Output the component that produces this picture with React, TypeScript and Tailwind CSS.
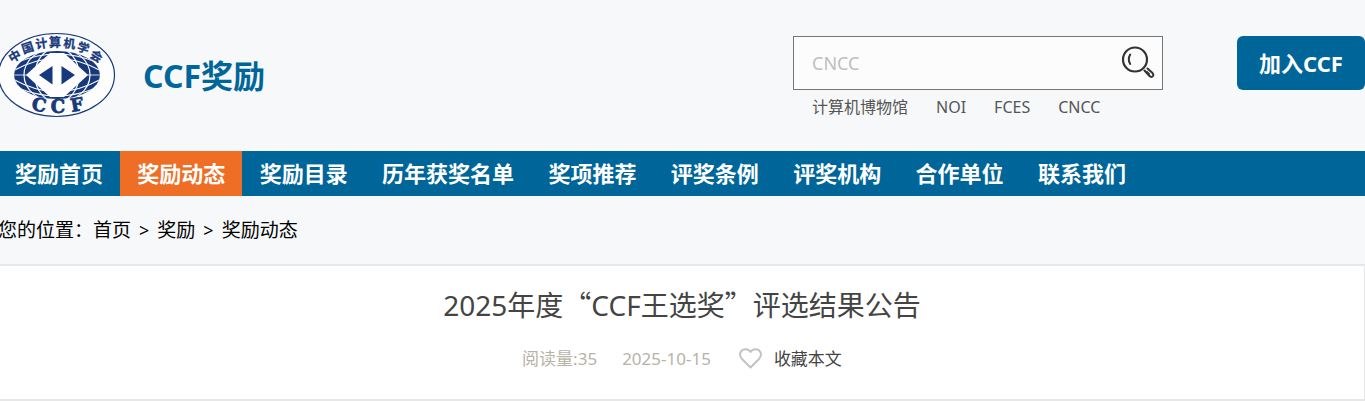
import React from "react";

const NAV_ITEMS = [
  "奖励首页",
  "奖励动态",
  "奖励目录",
  "历年获奖名单",
  "奖项推荐",
  "评奖条例",
  "评奖机构",
  "合作单位",
  "联系我们",
];

const HOT_WORDS = ["计算机博物馆", "NOI", "FCES", "CNCC"];

// characters along the top of the logo: x, y, rotation
const LOGO_CHARS: [string, number, number, number][] = [
  ["中", 19, 28, -30],
  ["国", 31, 20, -18],
  ["计", 44, 16, -8],
  ["算", 57, 15, 0],
  ["机", 71, 16, 6],
  ["学", 84, 20, 18],
  ["会", 96, 28, 32],
];

function Logo() {
  return (
    <svg viewBox="0 0 119 86" className="w-[119px] h-[86px] shrink-0" role="img" aria-label="中国计算机学会">
      <defs>
        <clipPath id="globe">
          <ellipse cx="59" cy="43" rx="43" ry="24" />
        </clipPath>
      </defs>
      <ellipse cx="58.500" cy="43" rx="58" ry="41.5" fill="#fdfdfe" stroke="#17397c" strokeWidth="1.2" />
      <g clipPath="url(#globe)">
        <rect x="15" y="16" width="88" height="54" fill="#17397c" />
        <g fill="none" stroke="#fdfdfe" strokeWidth="1.2">
          <ellipse cx="59" cy="43" rx="33" ry="27" />
          <ellipse cx="59" cy="43" rx="22" ry="27" />
          <path d="M15 39 Q36 27 59 26 Q82 27 103 39" />
          <path d="M15 47 Q36 59 59 60 Q82 59 103 47" />
          <path d="M15 43H103" strokeWidth="0.8" />
          <path d="M20 30 Q40 22 59 22 Q78 22 98 30" />
          <path d="M20 56 Q40 64 59 64 Q78 64 98 56" />
        </g>
        <path d="M28 43 L52 21 H66 L90 43 L66 65 H52 Z" fill="#fdfdfe" />
      </g>
      <path d="M41 43 L54.500 34 V52.500 Z M77 43 L63.500 34 V52.500 Z" fill="#17397c" />
      <g
        fill="#17397c"
        stroke="#17397c"
        strokeWidth="0.3"
        textAnchor="middle"
        className="font-['Noto_Sans_CJK_SC',sans-serif] text-[12px] font-bold"
      >
        {LOGO_CHARS.map(([char, x, y, angle]) => (
          <text key={char} transform={`translate(${x} ${y}) rotate(${angle})`}>{char}</text>
        ))}
      </g>
      <g
        fill="#17397c"
        stroke="#17397c"
        strokeWidth="0.8"
        textAnchor="middle"
        className="font-['DejaVu_Serif',serif] text-[18px] font-bold"
      >
        <text transform="translate(40 79) rotate(10)">C</text>
        <text x="60" y="81">C</text>
        <text transform="translate(80 79) rotate(-10)">F</text>
      </g>
    </svg>
  );
}

function SearchIcon() {
  return (
    <svg viewBox="0 0 34 34" className="w-[34px] h-[34px]" fill="none" stroke="#333" strokeLinecap="round">
      <circle cx="14" cy="13.500" r="12" strokeWidth="2.2" />
      <path d="M9.200 8.500 Q6.300 13.500 9.200 18" strokeWidth="2" />
      <path d="M23.500 24.500 L28 29.500 Q30.500 32 32 30 Q33 28.500 31 26.500 L26.500 22.500" strokeWidth="2" />
      <path d="M26 25.500 L28.500 28" strokeWidth="1.2" />
    </svg>
  );
}

function Header() {
  return (
    <header className="flex items-start h-[151px]">
      <a href="#" className="mt-8 -ml-0.5">
        <Logo />
      </a>
      <h1 className="mt-[53px] ml-[26px] text-[32px] leading-[46px] font-bold text-[#006699]">CCF奖励</h1>
      <div className="mt-9 ml-auto w-[370px]">
        <form className="flex items-center h-[54px] border border-[#767676] bg-[#fcfcfc]">
          <input
            type="text"
            aria-label="搜索"
            placeholder="CNCC"
            className="flex-1 min-w-0 h-full pl-[18px] text-[18px] text-[#333] placeholder:text-[#bfbfbf] bg-transparent outline-none"
          />
          <button type="button" aria-label="搜索" className="mr-[7px]">
            <SearchIcon />
          </button>
        </form>
        <div className="flex gap-7 pl-[19px] mt-1 text-[16px] leading-[26px] text-[#555]">
          {HOT_WORDS.map((word) => (
            <a key={word} href="#">{word}</a>
          ))}
        </div>
      </div>
      <button
        type="button"
        className="mt-9 ml-[74px] w-32 h-[54px] rounded-md bg-[#006699] text-[22px] font-bold text-white whitespace-nowrap"
      >
        加入CCF
      </button>
    </header>
  );
}

export default function App() {
  return (
    <div className="bg-[#f7f8fa] font-['Noto_Sans','Noto_Sans_CJK_SC',sans-serif] overflow-hidden" lang="zh-CN">
      <Header />

      <nav className="bg-[#006699]">
        <ul className="flex justify-between max-w-[1145px] -ml-0.5">
          {NAV_ITEMS.map((item) => (
            <li key={item}>
              <a
                href="#"
                className={`block px-[17px] text-[22px] leading-[45px] font-bold text-white whitespace-nowrap ${
                  item === "奖励动态" ? "bg-[#ee6e25]" : ""
                }`}
              >
                {item}
              </a>
            </li>
          ))}
        </ul>
      </nav>

      <div className="flex items-center h-[68px] -ml-0.5 text-[19px] text-black">
        <span>您的位置：</span>
        <a href="#">首页</a>
        <span className="px-2 text-[18px]">&gt;</span>
        <a href="#">奖励</a>
        <span className="px-2 text-[18px]">&gt;</span>
        <a href="#">奖励动态</a>
      </div>

      <article className="flex flex-col items-center bg-white border-y-2 border-r border-[#e7e7e8] pt-[17px] pb-[27px]">
        <h2 className="text-[28px] leading-[42px] text-[#444]">
          2025年度<span className="font-['Noto_Sans_CJK_SC',sans-serif]">“</span>CCF王选奖
          <span className="font-['Noto_Sans_CJK_SC',sans-serif]">”</span>评选结果公告
        </h2>
        <div className="flex items-center mt-[19px] text-[17px] leading-[27px] text-[#b8b2a7]">
          <span>阅读量:35</span>
          <time className="ml-[25px]">2025-10-15</time>
          <button type="button" className="flex items-center gap-3 ml-7 text-[#444]">
            <svg viewBox="0 0 23 21" className="w-[23px] h-[21px]" fill="none" stroke="#c2c2c2" strokeWidth="2">
              <path d="M11.500 19.500 L3 11 C-1 6 2 1.200 6.500 1.200 C9 1.200 10.500 2.500 11.500 4 C12.500 2.500 14 1.200 16.500 1.200 C21 1.200 24 6 20 11 Z" strokeLinejoin="round" />
            </svg>
            收藏本文
          </button>
        </div>
      </article>
    </div>
  );
}
